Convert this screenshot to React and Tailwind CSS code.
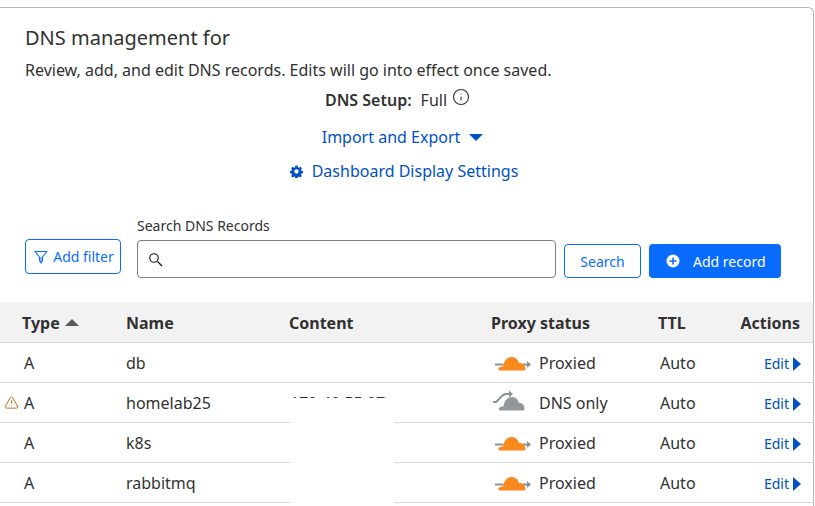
import { Info, TriangleAlert } from 'lucide-react'

const records = [
  { name: 'db', status: 'Proxied' },
  { name: 'homelab25', status: 'DNS only', warn: true, content: '172.40.55.97' },
  { name: 'k8s', status: 'Proxied' },
  { name: 'rabbitmq', status: 'Proxied' },
]

const columns = 'grid grid-cols-[104px_163px_202px_167px_1fr] pl-[22px] pr-[13px]'

const ProxiedIcon = () => (
  <svg width="36" height="18" viewBox="0 0 36 18" className="shrink-0">
    <path d="M0 10.500h8M28 10.500h5" stroke="#8d9196" strokeWidth="2" fill="none" />
    <path d="M32 7l4 3.500-4 3.500z" fill="#8d9196" />
    <path d="M5 16.500C3 16.500 2.500 14 5 13 6 12.400 7 12.400 8 12.500 8.500 7 12 3 16.500 3 20.500 3 23 5.500 24 9 27.500 8.500 30.500 11 30.500 14.500 30.500 16 29.500 16.500 28.500 16.500z" fill="#f8891f" />
  </svg>
)

const DnsOnlyIcon = () => (
  <svg width="32" height="20" viewBox="0 0 32 20" className="shrink-0 overflow-visible">
    <path d="M-2 9h3l6-6c1-1 2-2 3.500-2H15" stroke="#8d9196" strokeWidth="2" fill="none" />
    <path d="M14 -2.500l4 3.500-4 3.500z" fill="#8d9196" />
    <path d="M5.500 17.500C3.500 17.500 3 15 5.500 14 6.500 13.400 7.500 13.400 8.500 13.500 9 8 12.500 4 17 4 20.500 4 23 6.500 24 10 27 9.500 29.500 12 29.500 15.500 29.500 17 28.500 17.500 27.500 17.500z" fill="#92979b" />
  </svg>
)

const Row = ({ record }) => (
  <div className={`${columns} relative h-10 items-center border-b border-[#d9d9d9] text-[16px] text-[#313131]`}>
    {record.warn && (
      <TriangleAlert size={15} strokeWidth={1.5} className="absolute left-[4px] top-[12px] text-[#c9611c]" />
    )}
    <span className="pl-[2px]">A</span>
    <span>{record.name}</span>
    <span className="pl-[1px]">{record.content}</span>
    <span className="flex items-center">
      <span className="flex w-[48px] pl-[4px]">
        {record.warn ? <DnsOnlyIcon /> : <ProxiedIcon />}
      </span>
      {record.status}
    </span>
    <span className="flex items-center justify-between pl-[2px]">
      Auto
      <span className="-mr-[1px] flex translate-y-[1px] items-center gap-[4px] text-[14px] text-[#0051c3]">
        Edit
        <span className="h-0 w-0 border-y-[7px] border-l-[8px] border-y-transparent border-l-[#0051c3]" />
      </span>
    </span>
  </div>
)

export default function App() {
  return (
    <div className="relative h-[506px] w-[815px] overflow-hidden bg-white font-['Noto_Sans',sans-serif]">
      <div className="mt-[7px] h-[499px] w-[814px] rounded-tr-[6px] border-t border-r border-[#b6b6b6] pt-[16px]">
        <div className="px-[25px]">
          <h1 className="text-[20px] leading-[28px] text-[#313131]">DNS management for</h1>
          <p className="mt-[7px] text-[16px] leading-[22px] text-[#313131]">
            Review, add, and edit DNS records. Edits will go into effect once saved.
          </p>
        </div>

        <div className="mt-[8px] flex items-center justify-center pr-[18px] text-[16px] leading-[22px] text-[#313131]">
          <span className="font-semibold">DNS Setup:</span>
          <span className="ml-[9px]">Full</span>
          <Info size={18} strokeWidth={1.5} className="ml-[5px] -translate-y-[3px]" />
        </div>

        <div className="mt-[15px] flex items-center justify-center pr-[8px] text-[16px] leading-[22px] text-[#0051c3]">
          Import and Export
          <span className="ml-[9px] h-0 w-0 border-x-[7.5px] border-t-[7px] border-x-transparent border-t-[#0051c3]" />
        </div>

        <div className="mt-[12px] flex items-center justify-center pr-[5px] text-[16px] leading-[22px] text-[#0051c3]">
          <svg width="13" height="13" viewBox="0 0 24 24" className="mr-[9px]">
            <path
              fill="#0051c3"
              fillRule="evenodd"
              d="M10 1h4l.6 3.200 1.900.8 2.700-1.800 2.800 2.800-1.800 2.700.8 1.900 3 .4v4l-3 .6-.8 1.900 1.800 2.700-2.800 2.800-2.700-1.800-1.900.8-.6 3h-4l-.6-3-1.900-.8-2.700 1.800-2.800-2.800 1.800-2.700-.8-1.900-3-.6v-4l3-.4.8-1.900-1.800-2.700 2.800-2.800 2.700 1.800 1.900-.8zM12 8a4 4 0 1 0 0 8 4 4 0 0 0 0-8z"
            />
          </svg>
          Dashboard Display Settings
        </div>

        <div className="mt-[34px] flex items-end pl-[25px]">
          <button className="mb-[4px] flex h-[35px] w-[96px] items-center justify-center gap-[5px] rounded-[4px] border border-[#0a6cff] pl-[2px] text-[14px] text-[#0a6cff]">
            <svg width="14" height="14" viewBox="0 0 14 14" fill="none">
              <path d="M1 1.500h12L8.500 7v3.500L7 13 5.500 10.500V7z" stroke="#0a6cff" strokeWidth="1.100" strokeLinejoin="round" />
              <path d="M5.500 7h3v3.500L7 13l-1.500-2.500z" fill="#0a6cff" fillOpacity="0.5" />
            </svg>
            Add filter
          </button>
          <div className="ml-[16px] w-[419px]">
            <label className="block text-[14px] leading-[20px] text-[#313131]">Search DNS Records</label>
            <div className="mt-[4px] flex h-[38px] items-center rounded-[4px] border border-[#808080] pl-[10px]">
              <svg width="15" height="15" viewBox="0 0 15 15" fill="none" stroke="#222">
                <circle cx="6" cy="6" r="4.250" strokeWidth="1.200" />
                <path d="M9.500 9.500l4.500 4.500" strokeWidth="1.400" />
              </svg>
            </div>
          </div>
          <button className="ml-[8px] h-[34px] w-[77px] rounded-[4px] border border-[#0a6cff] text-[14px] text-[#0a6cff]">
            Search
          </button>
          <button className="ml-[8px] flex h-[34px] w-[132px] items-center rounded-[4px] bg-[#0a6cff] pl-[17px] text-[14px] text-white">
            <svg width="14" height="14" viewBox="0 0 14 14" className="mr-[13px]">
              <circle cx="7" cy="7" r="6.500" fill="white" />
              <path d="M7 3.500v7M3.500 7h7" stroke="#0a6cff" strokeWidth="1.500" />
            </svg>
            Add record
          </button>
        </div>

        <div className={`${columns} mt-[24px] h-[41px] items-center border-b border-[#d9d9d9] bg-[#f2f2f2] pt-[1px] text-[16px] font-bold text-[#313131]`}>
          <span className="flex items-center gap-[5px]">
            Type
            <span className="h-0 w-0 border-x-[7px] border-b-[7px] border-x-transparent border-b-[#595959]" />
          </span>
          <span>Name</span>
          <span>Content</span>
          <span>Proxy status</span>
          <span className="flex justify-between">
            TTL
            <span>Actions</span>
          </span>
        </div>

        {records.map((record) => (
          <Row key={record.name} record={record} />
        ))}
      </div>

      <div className="absolute left-[291px] top-[398px] h-[108px] w-[103px] bg-white" />
    </div>
  )
}
